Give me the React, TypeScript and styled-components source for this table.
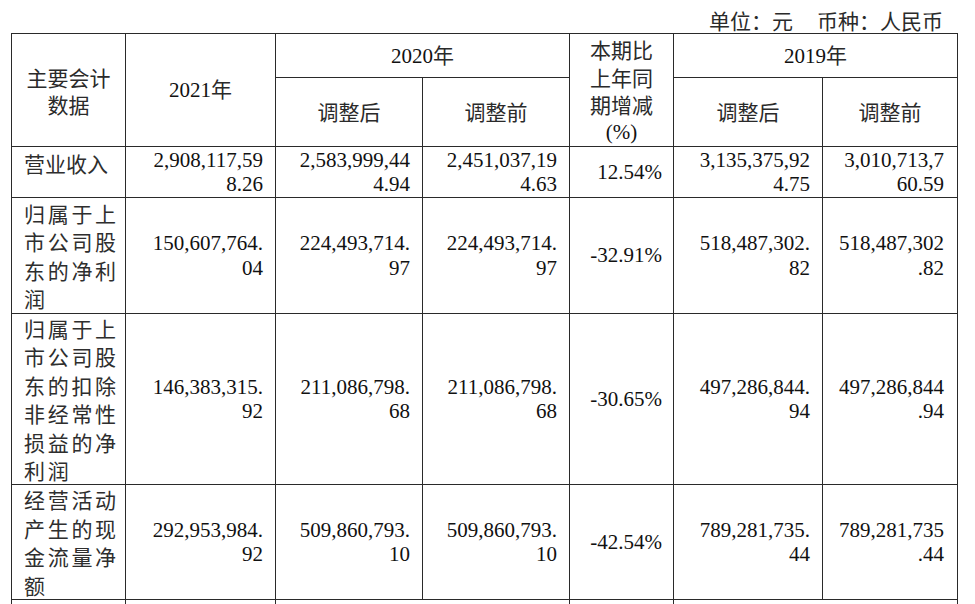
import React from "react";
import styled, { createGlobalStyle } from "styled-components";

const GlobalStyle = createGlobalStyle`
  html, body {
    margin: 0;
    padding: 0;
    background: #ffffff;
    overflow: hidden;
  }
  body {
    font-family: "Liberation Serif", "Noto Sans CJK SC", serif;
    color: #111;
  }
`;

const Page = styled.div`
  width: 975px;
  height: 604px;
  padding-left: 11px;
  box-sizing: border-box;
`;

const Caption = styled.div`
  width: 946px;
  height: 33px;
  box-sizing: border-box;
  padding: 7px 14px 0 0;
  display: flex;
  justify-content: flex-end;
  align-items: center;
  gap: 24px;
  font-family: "Noto Sans CJK SC", sans-serif;
  font-size: 21px;
  line-height: 26px;
  color: #2a2a2a;
`;

const Table = styled.table`
  border-collapse: collapse;
  table-layout: fixed;
  width: 946px;

  td {
    border: 1.5px solid #2a2a2a;
    padding: 0;
  }
`;

const Row = styled.tr<{ $h: number }>`
  height: ${({ $h }) => $h}px;
`;

const HeadCell = styled.td<{ $pt?: number }>`
  padding-top: ${({ $pt }) => $pt ?? 0}px !important;
  text-align: center;
  vertical-align: middle;
  font-family: "Noto Sans CJK SC", sans-serif;
  font-size: 21px;
  line-height: 27.5px;
  color: #2a2a2a;
`;

const HeadLine = styled.div<{ $latin?: boolean }>`
  font-family: ${({ $latin }) =>
    $latin ? `"Liberation Serif", serif` : `"Noto Sans CJK SC", sans-serif`};
  color: ${({ $latin }) => ($latin ? "#111" : "#2a2a2a")};
  white-space: nowrap;
`;

const Year = styled.span`
  font-family: "Liberation Serif", serif;
  color: #111;
`;

const LabelCell = styled.td<{ $top?: boolean }>`
  padding: ${({ $top }) => ($top ? "2px 0 0 12px" : "0 0 0 12px")} !important;
  vertical-align: ${({ $top }) => ($top ? "top" : "middle")};
  text-align: left;
`;

const Label = styled.div<{ $spread?: boolean }>`
  font-family: "Noto Sans CJK SC", sans-serif;
  font-size: 21px;
  line-height: 28.4px;
  letter-spacing: ${({ $spread }) => ($spread ? "2.7px" : "0")};
  white-space: nowrap;
  color: #2e2e2e;
`;

const NumCell = styled.td<{ $pr?: number }>`
  padding: 0 ${({ $pr }) => $pr ?? 12}px 0 0 !important;
  text-align: right;
  vertical-align: middle;
`;

const Num = styled.div`
  font-family: "Liberation Serif", serif;
  font-size: 21px;
  line-height: 24.5px;
  white-space: nowrap;
  color: #111;
`;

const TailCell = styled.td<{ $text?: boolean }>`
  vertical-align: top;
  text-align: center;
  font-family: "Noto Sans CJK SC", sans-serif;
  font-size: 21px;
  line-height: 28px;
  color: #444;
`;

type DataRow = {
  label: string[];
  height: number;
  values: string[][];
};

const rows: DataRow[] = [
  {
    label: ["营业收入"],
    height: 51,
    values: [
      ["2,908,117,59", "8.26"],
      ["2,583,999,44", "4.94"],
      ["2,451,037,19", "4.63"],
      ["12.54%"],
      ["3,135,375,92", "4.75"],
      ["3,010,713,7", "60.59"],
    ],
  },
  {
    label: ["归属于上", "市公司股", "东的净利", "润"],
    height: 116,
    values: [
      ["150,607,764.", "04"],
      ["224,493,714.", "97"],
      ["224,493,714.", "97"],
      ["-32.91%"],
      ["518,487,302.", "82"],
      ["518,487,302", ".82"],
    ],
  },
  {
    label: ["归属于上", "市公司股", "东的扣除", "非经常性", "损益的净", "利润"],
    height: 171,
    values: [
      ["146,383,315.", "92"],
      ["211,086,798.", "68"],
      ["211,086,798.", "68"],
      ["-30.65%"],
      ["497,286,844.", "94"],
      ["497,286,844", ".94"],
    ],
  },
  {
    label: ["经营活动", "产生的现", "金流量净", "额"],
    height: 114,
    values: [
      ["292,953,984.", "92"],
      ["509,860,793.", "10"],
      ["509,860,793.", "10"],
      ["-42.54%"],
      ["789,281,735.", "44"],
      ["789,281,735", ".44"],
    ],
  },
];

const widths = [114, 150, 147, 147, 104, 149, 135];

export default function App() {
  return (
    <Page>
      <GlobalStyle />
      <Caption>
        <span>单位：元</span>
        <span>币种：人民币</span>
      </Caption>
      <Table>
        <colgroup>
          {widths.map((w, i) => (
            <col key={i} style={{ width: w }} />
          ))}
        </colgroup>
        <tbody>
          <Row $h={44}>
            <HeadCell rowSpan={2} $pt={2}>
              <HeadLine>主要会计</HeadLine>
              <HeadLine>数据</HeadLine>
            </HeadCell>
            <HeadCell rowSpan={2}>
              <HeadLine>
                <Year>2021</Year>年
              </HeadLine>
            </HeadCell>
            <HeadCell colSpan={2}>
              <HeadLine>
                <Year>2020</Year>年
              </HeadLine>
            </HeadCell>
            <HeadCell rowSpan={2} $pt={2}>
              <HeadLine>本期比</HeadLine>
              <HeadLine>上年同</HeadLine>
              <HeadLine>期增减</HeadLine>
              <HeadLine $latin>(%)</HeadLine>
            </HeadCell>
            <HeadCell colSpan={2}>
              <HeadLine>
                <Year>2019</Year>年
              </HeadLine>
            </HeadCell>
          </Row>
          <Row $h={68}>
            <HeadCell>
              <HeadLine>调整后</HeadLine>
            </HeadCell>
            <HeadCell>
              <HeadLine>调整前</HeadLine>
            </HeadCell>
            <HeadCell>
              <HeadLine>调整后</HeadLine>
            </HeadCell>
            <HeadCell>
              <HeadLine>调整前</HeadLine>
            </HeadCell>
          </Row>
          {rows.map((row, ri) => (
            <Row key={ri} $h={row.height}>
              <LabelCell $top={row.label.length === 1}>
                <Label $spread={row.label.length > 1}>
                  {row.label.map((line, li) => (
                    <div key={li}>{line}</div>
                  ))}
                </Label>
              </LabelCell>
              {row.values.map((lines, ci) => (
                <NumCell key={ci} $pr={ci === 3 ? 11 : ci === 5 ? 13 : 12}>
                  <Num>
                    {lines.map((l, li) => (
                      <div key={li}>{l}</div>
                    ))}
                  </Num>
                </NumCell>
              ))}
            </Row>
          ))}
          <Row $h={110}>
            <TailCell />
            <TailCell />
            <TailCell colSpan={2} />
            <TailCell>
              本年末
              <br />
              比上年
              <br />
              末增减
            </TailCell>
            <TailCell colSpan={2} />
          </Row>
        </tbody>
      </Table>
    </Page>
  );
}
